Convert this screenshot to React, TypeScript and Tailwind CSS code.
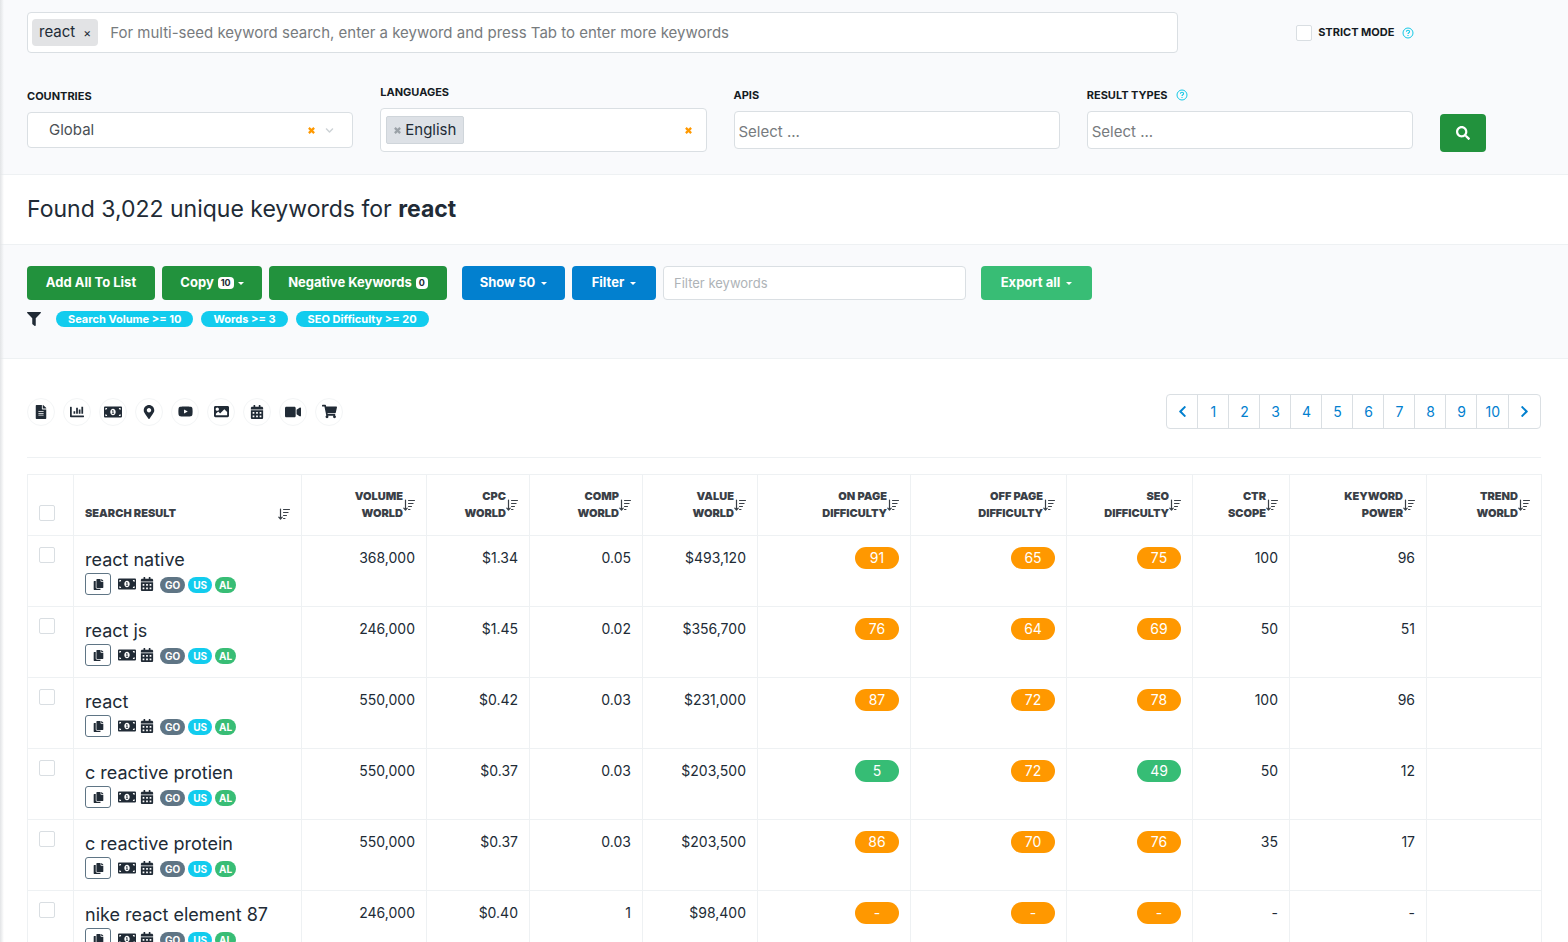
import { useState } from "react";
import {
    FaCalendarAlt, FaChartBar, FaChevronDown, FaChevronLeft, FaChevronRight, FaCopy, FaFileAlt,
    FaFilter, FaImage, FaMapMarkerAlt, FaMoneyBillAlt, FaSearch, FaShoppingCart, FaVideo, FaYoutube
} from "react-icons/fa";

const columns = [
    {top: 'Volume', bottom: 'World', width: 'w-[125px]'},
    {top: 'CPC', bottom: 'World', width: 'w-[103px]'},
    {top: 'Comp', bottom: 'World', width: 'w-[113px]'},
    {top: 'Value', bottom: 'World', width: 'w-[115px]'},
    {top: 'On Page', bottom: 'Difficulty', width: 'w-[153px]'},
    {top: 'Off Page', bottom: 'Difficulty', width: 'w-[156px]'},
    {top: 'SEO', bottom: 'Difficulty', width: 'w-[126px]'},
    {top: 'CTR', bottom: 'Scope', width: 'w-[97px]'},
    {top: 'Keyword', bottom: 'Power', width: 'w-[137px]'},
    {top: 'Trend', bottom: 'World', width: 'w-[115px]'},
]

const keywords = [
    {name: 'react native', stats: ['368,000', '$1.34', '0.05', '$493,120'], difficulty: ['91', '65', '75'], ctr: '100', power: '96'},
    {name: 'react js', stats: ['246,000', '$1.45', '0.02', '$356,700'], difficulty: ['76', '64', '69'], ctr: '50', power: '51'},
    {name: 'react', stats: ['550,000', '$0.42', '0.03', '$231,000'], difficulty: ['87', '72', '78'], ctr: '100', power: '96'},
    {name: 'c reactive protien', stats: ['550,000', '$0.37', '0.03', '$203,500'], difficulty: ['5', '72', '49'], ctr: '50', power: '12'},
    {name: 'c reactive protein', stats: ['550,000', '$0.37', '0.03', '$203,500'], difficulty: ['86', '70', '76'], ctr: '35', power: '17'},
    {name: 'nike react element 87', stats: ['246,000', '$0.40', '1', '$98,400'], difficulty: ['-', '-', '-'], ctr: '-', power: '-'},
]

const resultTypes = [
    {label: 'Articles', icon: <FaFileAlt />},
    {label: 'Statistics', icon: <FaChartBar />},
    {label: 'Paid results', icon: <FaMoneyBillAlt size={18} />},
    {label: 'Places', icon: <FaMapMarkerAlt />},
    {label: 'YouTube', icon: <FaYoutube size={15} />},
    {label: 'Images', icon: <FaImage size={15} />},
    {label: 'Events', icon: <FaCalendarAlt />},
    {label: 'Videos', icon: <FaVideo size={16} />},
    {label: 'Shopping', icon: <FaShoppingCart size={15} />},
]

function SortIcon(){
    return (
        <svg className="h-3 w-3 shrink-0" viewBox="0 0 12 12" fill="none" stroke="currentColor" strokeLinecap="round" strokeLinejoin="round">
            <path d="M2.5 1v10M.8 9.2l1.7 1.9 1.7-1.9" strokeWidth="1.2" />
            <path d="M5.5 1.5h6M5.5 4.5h4.6M5.5 7.5h3M5.5 10.5h1.5" />
        </svg>
    )
}

function HelpIcon(){
    return (
        <svg className="h-3 w-3 shrink-0 text-[#14c8e6]" viewBox="0 0 12 12" fill="none" stroke="currentColor">
            <circle cx="6" cy="6" r="5" />
            <path d="M4.4 4.8C4.4 3.8 5 3.3 6 3.3s1.6.6 1.6 1.4c0 1-1.6 1.1-1.6 2.2M6 7.9v1" strokeWidth="1.1" />
        </svg>
    )
}

function CloseIcon({className}: {className: string}){
    return (
        <svg className={className} viewBox="0 0 8 8" fill="none" stroke="currentColor" strokeWidth="2.6">
            <path d="M1 1l6 6M7 1L1 7" />
        </svg>
    )
}

function Caret(){
    return (
        <svg className="h-[3px] w-1.5" viewBox="0 0 6 3" fill="currentColor">
            <path d="M0 0h6L3 3z" />
        </svg>
    )
}

function Checkbox({label}: {label: string}){
    return <input type="checkbox" aria-label={label} className="block h-4 w-4 appearance-none rounded-xs border border-[#d9dee2] bg-white checked:bg-[#0280cf]" />
}

function Difficulty({value}: {value: string}){
    const easy = Number(value) < 50
    return <span className={`inline-block h-[22px] w-11 rounded-full text-center leading-[22px] text-white ${easy ? 'bg-[#36bd75]' : 'bg-[#ff9800]'}`}>{value}</span>
}

function SearchForm(){
    const label = "block h-[25px] text-[11px] font-bold leading-[19px] text-[#151b23] uppercase"
    const box = "flex items-center rounded-sm border border-[#dadfe3] bg-white"

    return (
        <form className="border-b border-[#eef1f3] bg-[#f9fafc] px-[27px] pt-3 pb-[22px]" onSubmit={e => e.preventDefault()}>
            <div className="flex items-center">
                <div className="flex h-[41px] w-[76%] items-center rounded-sm border border-[#dadfe3] bg-white pl-1">
                    <span className="flex h-[27px] items-center gap-2 rounded-sm bg-[#e2e3e5] px-[7px] text-[15px]">
                        react
                        <button type="button" aria-label="Remove react" className="text-xs">×</button>
                    </span>
                    <input aria-label="Keywords" className="ml-3 min-w-0 flex-1 pt-0.5 text-[15px] outline-none placeholder:text-[#777b7e]" placeholder="For multi-seed keyword search, enter a keyword and press Tab to enter more keywords" />
                </div>
                <div className="flex flex-1 items-center justify-center pr-2">
                    <label className="flex items-center gap-1.5 text-[11px] font-bold text-[#151b23] uppercase">
                        <Checkbox label="Strict mode" />
                        Strict mode
                    </label>
                    <span className="ml-2"><HelpIcon /></span>
                </div>
            </div>

            <div className="mt-[30px] grid grid-cols-[repeat(4,minmax(0,1fr))_101px] items-center gap-x-[27px]">
                <div>
                    <label htmlFor="countries" className={label}>Countries</label>
                    <div className={`${box} h-9 pr-[18px] pl-[21px]`}>
                        <select id="countries" className="min-w-0 flex-1 appearance-none text-[15px] text-[#4a4f54] outline-none">
                            <option>Global</option>
                        </select>
                        <button type="button" aria-label="Clear country"><CloseIcon className="h-[7px] w-[7px] text-[#f90]" /></button>
                        <FaChevronDown size={9} className="ml-2.5 text-[#cdd2d6]" />
                    </div>
                </div>
                <div>
                    <label htmlFor="languages" className={label}>Languages</label>
                    <div className={`${box} h-11 pr-3.5 pl-[5px]`}>
                        <span className="flex h-7 items-center gap-1 rounded-xs border border-[#cfd5da] bg-[#dde1e6] px-[7px] text-[15px]">
                            <button type="button" aria-label="Remove English"><CloseIcon className="h-[7px] w-[7px] text-[#9aa1a7]" /></button>
                            English
                        </span>
                        <input id="languages" className="min-w-0 flex-1 outline-none" />
                        <button type="button" aria-label="Clear languages"><CloseIcon className="h-[7px] w-[7px] text-[#f90]" /></button>
                    </div>
                </div>
                <div>
                    <label htmlFor="apis" className={label}>APIs</label>
                    <div className={`${box} h-[38px] px-1 pt-1`}>
                        <input id="apis" className="min-w-0 flex-1 text-[15px] outline-none placeholder:text-[#777b7e]" placeholder="Select ..." />
                    </div>
                </div>
                <div>
                    <div className="flex">
                        <label htmlFor="types" className={label}>Result types</label>
                        <span className="mt-[3px] ml-2"><HelpIcon /></span>
                    </div>
                    <div className={`${box} h-[38px] px-1 pt-1`}>
                        <input id="types" className="min-w-0 flex-1 text-[15px] outline-none placeholder:text-[#777b7e]" placeholder="Select ..." />
                    </div>
                </div>
                <button aria-label="Search" className="flex h-[38px] w-[46px] items-center justify-center self-end rounded-sm bg-[#22923d] text-white">
                    <FaSearch size={14} />
                </button>
            </div>
        </form>
    )
}

function Toolbar(){
    const [filter, setFilter] = useState('')
    const button = "flex h-[34px] items-center justify-center gap-1 rounded-sm text-[13px] font-bold text-white"
    const filters = ['Search Volume >= 10', 'Words >= 3', 'SEO Difficulty >= 20']

    return (
        <section className="border-b border-[#eef1f3] bg-[#f9fafc] px-[27px] pt-[21px] pb-[30px]">
            <div className="flex items-center gap-[7px]">
                <button className={`${button} w-32 bg-[#22923d]`}>Add All To List</button>
                <button className={`${button} w-[100px] bg-[#22923d]`}>
                    Copy <span className="rounded-sm bg-white px-[3px] text-[9px] leading-3 text-[#212b36]">10</span><Caret />
                </button>
                <button className={`${button} w-[178px] bg-[#22923d]`}>
                    Negative Keywords <span className="rounded-sm bg-white px-[3px] text-[9px] leading-3 text-[#212b36]">0</span>
                </button>
                <button className={`${button} ml-2 w-[103px] gap-1.5 bg-[#0280cf]`}>Show 50 <Caret /></button>
                <button className={`${button} w-[84px] gap-1.5 bg-[#0280cf]`}>Filter <Caret /></button>
                <input
                    aria-label="Filter keywords"
                    className="h-[34px] w-[303px] rounded-sm border border-[#dadfe3] bg-white px-2.5 text-[13px] outline-none placeholder:text-[#aeb3b7]"
                    placeholder="Filter keywords"
                    value={filter}
                    onChange={e => setFilter(e.target.value)}
                />
                <button className={`${button} ml-2 w-[111px] gap-1.5 bg-[#38bd75]`}>Export all <Caret /></button>
            </div>
            <div className="mt-2.5 flex h-[18px] items-center gap-2">
                <FaFilter size={14} className="mr-[7px]" />
                {filters.map(text => (
                    <span key={text} className="h-4 rounded-full bg-[#12ccee] px-3 text-[11px] leading-4 font-bold text-white">{text}</span>
                ))}
            </div>
        </section>
    )
}

function Pagination(){
    const pages = [1, 2, 3, 4, 5, 6, 7, 8, 9, 10]
    const link = "flex min-w-[31px] items-center justify-center px-2"
    return (
        <nav aria-label="Pages" className="flex h-[35px] divide-x divide-[#dadfe3] rounded-sm border border-[#dadfe3] text-sm text-[#0280cf]">
            <a href="#prev" aria-label="Previous" className={link}><FaChevronLeft size={13} /></a>
            {pages.map(page => (
                <a key={page} href={`#${page}`} className={link}>{page}</a>
            ))}
            <a href="#next" aria-label="Next" className={link}><FaChevronRight size={13} /></a>
        </nav>
    )
}

function ResultsTable(){
    const cell = "border border-[#eef1f3] px-[11px]"

    let rows = keywords.map((row)=>{
        return (
            <tr key={row.name} className="h-[71px] align-top">
                <td className={`${cell} pt-[11px]`}><Checkbox label={row.name} /></td>
                <td className={`${cell} pt-3`}>
                    <div className="text-lg leading-6">{row.name}</div>
                    <div className="mt-px flex items-center">
                        <button aria-label={`Copy ${row.name}`} className="flex h-[22px] w-[26px] items-center justify-center rounded-[3px] border border-[#5f7585]"><FaCopy size={11} /></button>
                        <FaMoneyBillAlt size={18} className="ml-[7px]" />
                        <FaCalendarAlt size={14} className="ml-1" />
                        <div className="mt-0.5 ml-1.5 flex gap-[3px] text-[10px] leading-4 font-bold text-white">
                            <span className="rounded-full bg-[#5f7585] px-[5px]">GO</span>
                            <span className="rounded-full bg-[#12ccee] px-[5px]">US</span>
                            <span className="rounded-full bg-[#38bd75] px-1">AL</span>
                        </div>
                    </div>
                </td>
                {row.stats.map((stat, index) => <td key={index} className={`${cell} pt-[11px] text-right`}>{stat}</td>)}
                {row.difficulty.map((value, index) => <td key={index} className={`${cell} pt-[11px] text-right`}><Difficulty value={value} /></td>)}
                <td className={`${cell} pt-[11px] text-right`}>{row.ctr}</td>
                <td className={`${cell} pt-[11px] text-right`}>{row.power}</td>
                <td className={cell}></td>
            </tr>
        )
    });

    return (
        <table className="mt-4 w-full table-fixed border-collapse text-sm leading-[22px]">
            <thead>
                <tr className="h-[61px] align-bottom text-[11px] leading-[17px] text-[#3a4047] uppercase">
                    <th className={`${cell} w-[46px] pb-[14px]`}><Checkbox label="Select all" /></th>
                    <th className={`${cell} w-[228px] pb-[13px]`}>
                        <div className="flex items-center justify-between font-black">Search result <SortIcon /></div>
                    </th>
                    {columns.map((column, index) => (
                        <th key={index} className={`${cell} ${column.width} pb-[13px]`}>
                            <div className="flex items-center justify-end text-right font-black">
                                <span>{column.top}<br />{column.bottom}</span>
                                <SortIcon />
                            </div>
                        </th>
                    ))}
                </tr>
            </thead>
            <tbody>{rows}</tbody>
        </table>
    )
}

function App(){
    return (
        <div className="relative bg-white font-['Inter','Open_Sans',sans-serif] text-[#212b36]">
            {/* shadow cast by the side menu */}
            <div className="pointer-events-none absolute inset-y-0 left-0 w-1 bg-linear-to-r from-[#e2e4e6] to-transparent" />
            <SearchForm />
            <h1 className="flex h-[70px] items-center border-b border-[#eef1f3] px-[27px] text-[23px]">
                <span>Found 3,022 unique keywords for <b>react</b></span>
            </h1>
            <Toolbar />
            <main className="px-[27px] pt-[35px]">
                <div className="flex items-center justify-between border-b border-[#eef1f3] pb-7">
                    <div className="flex gap-2">
                        {resultTypes.map(type => (
                            <button key={type.label} aria-label={type.label} className="flex h-7 w-7 items-center justify-center rounded-full border border-[#f3f5f6] text-sm">{type.icon}</button>
                        ))}
                    </div>
                    <Pagination />
                </div>
                <ResultsTable />
            </main>
        </div>
    )
}

export default App;
